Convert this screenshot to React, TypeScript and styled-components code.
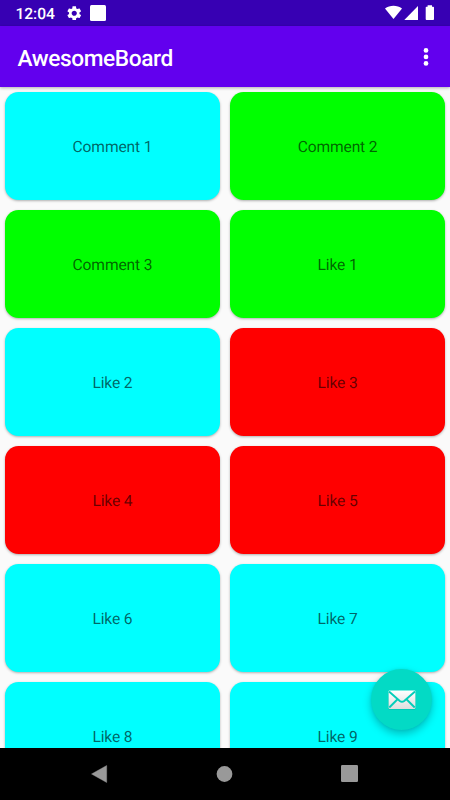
import React from "react";
import styled, { createGlobalStyle } from "styled-components";

const GlobalStyle = createGlobalStyle`
  *, *::before, *::after { box-sizing: border-box; }
  body {
    margin: 0;
    font-family: Roboto, sans-serif;
    text-rendering: geometricPrecision;
  }
`;

const Screen = styled.div`
  position: relative;
  display: flex;
  flex-direction: column;
  width: 450px;
  height: 800px;
  overflow: hidden;
  background: #fafafa;
`;

const StatusBar = styled.header`
  display: flex;
  align-items: center;
  flex: 0 0 26px;
  padding: 0 15px 0 15.4px;
  background: #3700b3;
  color: #fff;
`;

const Clock = styled.span`
  width: 51.4px;
  padding-top: 2px;
  font-size: 15.6px;
  font-weight: 500;
  line-height: 20px;
`;

const Notice = styled.span`
  width: 16px;
  height: 16px;
  margin-left: 9px;
  border-radius: 1.5px;
  background: #fff;
`;

const StatusIcons = styled.svg`
  margin-left: auto;
`;

const AppBar = styled.div`
  position: relative;
  z-index: 1;
  display: flex;
  align-items: center;
  justify-content: space-between;
  flex: 0 0 61px;
  padding: 0 20px 0 17.5px;
  background: #6200ee;
  color: #fff;
  box-shadow: 0 1px 3px rgba(0, 0, 0, 0.3);
`;

const Title = styled.h1`
  margin: 0;
  padding-top: 4px;
  font-size: 22.7px;
  font-weight: 500;
  letter-spacing: -0.4px;
  line-height: 28px;
`;

const MenuButton = styled.button`
  display: flex;
  padding: 0;
  border: 0;
  background: none;
`;

const Board = styled.main`
  display: grid;
  flex: 1;
  min-height: 0;
  grid-template-columns: 1fr 1fr;
  grid-auto-rows: 108.4px;
  gap: 9.6px;
  padding: 5px 4.7px 0;
  overflow: hidden;
`;

const Card = styled.article<{ $color: string }>`
  display: flex;
  align-items: center;
  justify-content: center;
  border-radius: 13.5px;
  background: ${({ $color }) => $color};
  box-shadow: 0 1px 2.5px rgba(0, 0, 0, 0.3);
  color: rgba(0, 0, 0, 0.62);
  font-size: 15.6px;
  letter-spacing: -0.15px;
  line-height: 20px;
  padding-top: 2px;
`;

const Fab = styled.button`
  position: absolute;
  z-index: 2;
  left: 371px;
  top: 669px;
  display: flex;
  align-items: center;
  justify-content: center;
  width: 61px;
  height: 61px;
  padding: 0;
  border: 0;
  border-radius: 50%;
  background: #03dac5;
  box-shadow: 0 4px 8px rgba(0, 0, 0, 0.26), 0 0 3px rgba(0, 0, 0, 0.08);
`;

const NavBar = styled.nav`
  position: relative;
  z-index: 3;
  display: flex;
  align-items: center;
  justify-content: space-between;
  flex: 0 0 52px;
  padding: 0 92px 1px 91px;
  background: #000;
`;

const NavIcon = styled.svg`
  display: block;
  fill: #999;
  overflow: visible;
`;

const CYAN = "#00ffff";
const GREEN = "#00ff00";
const RED = "#ff0000";

const items = [
  { label: "Comment 1", color: CYAN },
  { label: "Comment 2", color: GREEN },
  { label: "Comment 3", color: GREEN },
  { label: "Like 1", color: GREEN },
  { label: "Like 2", color: CYAN },
  { label: "Like 3", color: RED },
  { label: "Like 4", color: RED },
  { label: "Like 5", color: RED },
  { label: "Like 6", color: CYAN },
  { label: "Like 7", color: CYAN },
  { label: "Like 8", color: CYAN },
  { label: "Like 9", color: CYAN },
];

export default function App() {
  return (
    <>
      <GlobalStyle />
      <Screen>
        <StatusBar>
          <Clock>12:04</Clock>
          <svg width="14.500" height="14.500" viewBox="2 2 20 20" fill="#fff">
            <path d="M19.14 12.94c.04-.3.06-.61.06-.94 0-.32-.02-.64-.07-.94l2.03-1.58c.18-.14.23-.41.12-.61l-1.92-3.32c-.12-.22-.37-.29-.59-.22l-2.39.96c-.5-.38-1.03-.7-1.62-.94l-.36-2.54c-.04-.24-.24-.41-.48-.41h-3.84c-.24 0-.43.17-.47.41l-.36 2.54c-.59.24-1.13.57-1.62.94l-2.39-.96c-.22-.08-.47 0-.59.22L2.74 8.87c-.12.21-.08.47.12.61l2.03 1.58c-.05.3-.09.63-.09.94s.02.64.07.94l-2.03 1.58c-.18.14-.23.41-.12.61l1.92 3.32c.12.22.37.29.59.22l2.39-.96c.5.38 1.03.7 1.62.94l.36 2.54c.05.24.24.41.48.41h3.84c.24 0 .44-.17.47-.41l.36-2.54c.59-.24 1.13-.56 1.62-.94l2.39.96c.22.08.47 0 .59-.22l1.92-3.32c.12-.22.07-.47-.12-.61l-2.01-1.58zM12 15.6c-1.98 0-3.600-1.620-3.600-3.600s1.620-3.600 3.600-3.600 3.600 1.620 3.600 3.600-1.620 3.600-3.600 3.600z" />
          </svg>
          <Notice />
          <StatusIcons width="50" height="16" viewBox="385 5 50 16" fill="#fff">
            <path d="M385 8.4C389.800 5 397.200 5 402 8.400L393.500 19Z" />
            <path d="M418 6V20H404.300Z" />
            <path d="M427.600 5.200h4.400v1.600h1.200q.8 0 .8.800V19q0 1-.8 1h-6.700q-.8 0-.8-1V7.600q0-.8.8-.8h1.100z" />
          </StatusIcons>
        </StatusBar>
        <AppBar>
          <Title>AwesomeBoard</Title>
          <MenuButton aria-label="More options">
            <svg width="8" height="20" viewBox="0 0 8 20" fill="#fff">
              <circle cx="4" cy="3.400" r="2.350" />
              <circle cx="4" cy="9.900" r="2.350" />
              <circle cx="4" cy="16.400" r="2.350" />
            </svg>
          </MenuButton>
        </AppBar>
        <Board>
          {items.map(({ label, color }) => (
            <Card key={label} $color={color}>
              {label}
            </Card>
          ))}
        </Board>
        <NavBar>
          <NavIcon width="16" height="18" viewBox="0 0 16 18">
            <path d="M15.700 0.500V17.500L0.500 9Z" stroke="#999" strokeWidth=".4" strokeLinejoin="round" />
          </NavIcon>
          <NavIcon width="16" height="16" viewBox="0 0 16 16">
            <circle cx="8.500" cy="8" r="7.900" />
          </NavIcon>
          <NavIcon width="17" height="17" viewBox="0 0 17 17">
            <rect width="17" height="17" rx="1.200" />
          </NavIcon>
        </NavBar>
        <Fab aria-label="Email">
          <svg width="28" height="20" viewBox="0 0 28 20">
            <defs>
              <linearGradient id="paper" x1="0" y1="0" x2="0" y2="1">
                <stop offset="0" stopColor="#ffffff" />
                <stop offset="1" stopColor="#dedede" />
              </linearGradient>
            </defs>
            <rect x=".6" y="1.300" width="26.800" height="18.300" rx=".8" fill="#006d66" opacity=".3" />
            <rect x=".6" y=".6" width="26.800" height="18.300" rx=".8" fill="url(#paper)" />
            <path
              d="M1 1.500L11.800 10.900Q14 12.600 16.200 10.900L27 1.500M1.300 17.500L9.300 9.500M26.700 17.500L18.700 9.500"
              fill="none"
              stroke="#03cdb9"
              strokeWidth="1.900"
            />
          </svg>
        </Fab>
      </Screen>
    </>
  );
}
